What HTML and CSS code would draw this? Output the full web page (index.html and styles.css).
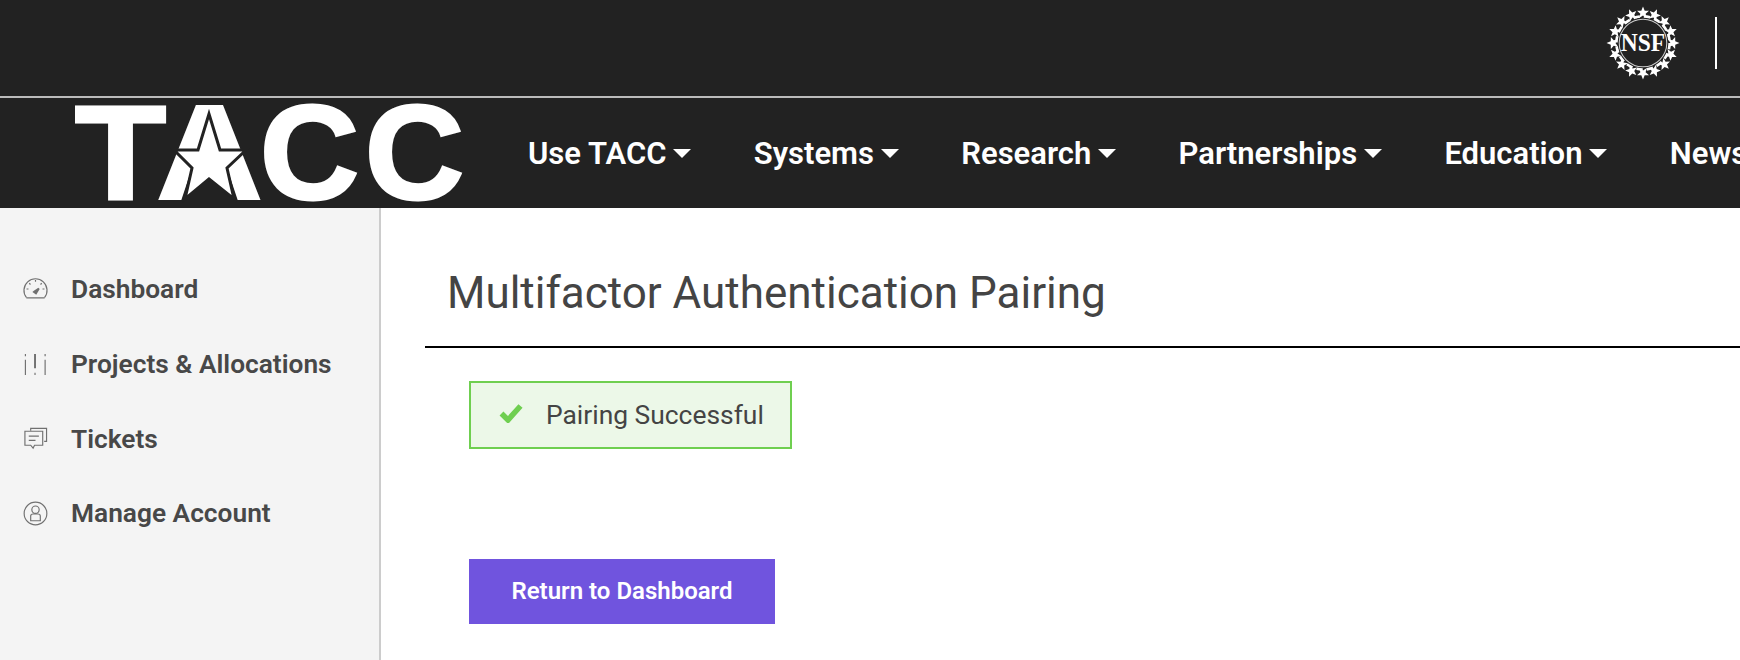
FILE: index.html
```html
<!DOCTYPE html>
<html lang="en">
<head>
<meta charset="utf-8">
<title>Multifactor Authentication Pairing</title>
<link rel="stylesheet" href="styles.css">
</head>
<body>
<header class="site-header">
  <div class="top-bar">
    <svg class="nsf" viewBox="-35 -35 70 70" width="74" height="74" aria-label="NSF">
      <defs>
        <polygon id="st" points="0,-6 1.6,-2 5.7,-1.9 2.5,0.8 3.6,4.9 0,2.5 -3.6,4.9 -2.5,0.8 -5.7,-1.9 -1.6,-2"/>
      </defs>
      <circle class="nsf-dash" r="25.2"/>
      <circle class="nsf-thin" r="22.5"/>
      <g class="nsf-stars">
        <use href="#st" transform="rotate(0) translate(0 -28.5)"/>
        <use href="#st" transform="rotate(22.5) translate(0 -28.5)"/>
        <use href="#st" transform="rotate(45) translate(0 -28.5)"/>
        <use href="#st" transform="rotate(67.5) translate(0 -28.5)"/>
        <use href="#st" transform="rotate(90) translate(0 -28.5)"/>
        <use href="#st" transform="rotate(112.5) translate(0 -28.5)"/>
        <use href="#st" transform="rotate(135) translate(0 -28.5)"/>
        <use href="#st" transform="rotate(157.5) translate(0 -28.5)"/>
        <use href="#st" transform="rotate(180) translate(0 -28.5)"/>
        <use href="#st" transform="rotate(202.5) translate(0 -28.5)"/>
        <use href="#st" transform="rotate(225) translate(0 -28.5)"/>
        <use href="#st" transform="rotate(247.5) translate(0 -28.5)"/>
        <use href="#st" transform="rotate(270) translate(0 -28.5)"/>
        <use href="#st" transform="rotate(292.5) translate(0 -28.5)"/>
        <use href="#st" transform="rotate(315) translate(0 -28.5)"/>
        <use href="#st" transform="rotate(337.5) translate(0 -28.5)"/>
      </g>
      <text class="nsf-text" x="0" y="7.500" text-anchor="middle" textLength="42" lengthAdjust="spacingAndGlyphs">NSF</text>
    </svg>
    <span class="top-divider"></span>
  </div>
  <nav class="main-nav">
    <svg class="logo" viewBox="0 0 470 110" width="470" height="110" aria-label="TACC">
      <g class="logo-letters">
        <text x="75" y="100.500" textLength="91" lengthAdjust="spacingAndGlyphs">T</text>
        <text x="157" y="100.500" textLength="105" lengthAdjust="spacingAndGlyphs">A</text>
        <text x="260" y="100.500" textLength="99" lengthAdjust="spacingAndGlyphs">C</text>
        <text x="365" y="100.500" textLength="99" lengthAdjust="spacingAndGlyphs">C</text>
      </g>
      <polygon class="logo-fill" points="209,8 186,62 232,62"/>
      <polygon class="logo-notch" points="181,103 192,70 227,70 238,103"/>
      <polygon class="logo-star" points="209,16 220,52 246,52 227,70 234,101 209,81 185,101 192,70 174,52 198,52"/>
    </svg>
    <ul class="nav-list">
      <li class="nav-item">Use TACC<span class="caret"></span></li>
      <li class="nav-item">Systems<span class="caret"></span></li>
      <li class="nav-item">Research<span class="caret"></span></li>
      <li class="nav-item">Partnerships<span class="caret"></span></li>
      <li class="nav-item">Education<span class="caret"></span></li>
      <li class="nav-item">News</li>
    </ul>
  </nav>
</header>
<div class="layout">
  <aside class="sidebar">
    <a class="side-link">
      <svg class="side-icon" viewBox="0 0 26 26"><path d="M3.500 21.200A12 12 0 1 1 22.500 21.200M3.500 21.700H22.500"/><path d="M13 3v2M3.700 12.500h2M20.300 12.500h2M6.500 6.500l1.300 1.300M19.500 6.500l-1.300 1.300"/><path class="thick" d="M11.500 15.500l5-3.500-3 5z"/></svg>
      <span>Dashboard</span>
    </a>
    <a class="side-link">
      <svg class="side-icon" viewBox="0 0 26 26"><path d="M2.500 2v2.500M2.500 8v16M12.500 21.500v2.500M23 2v2.500M23 8v16"/><path class="thick" d="M12.500 2v15"/></svg>
      <span>Projects &amp; Allocations</span>
    </a>
    <a class="side-link">
      <svg class="side-icon" viewBox="0 0 26 26"><path d="M8 5V2.500H24.500V16H22"/><path d="M2 8.500V5.500H20.500V20H12L10.500 23 8 20H2V8.500z"/><path d="M6 10.500H16.500M6 15H13"/></svg>
      <span>Tickets</span>
    </a>
    <a class="side-link">
      <svg class="side-icon" viewBox="0 0 26 26"><circle cx="13" cy="13" r="11.800"/><circle cx="13" cy="9" r="3.800"/><path d="M8 20.500V15.500Q8 13.500 10.500 13.500H15.500Q18 13.500 18 15.500V20.500z"/></svg>
      <span>Manage Account</span>
    </a>
  </aside>
  <main class="content">
    <h1 class="page-title">Multifactor Authentication Pairing</h1>
    <div class="body-pane">
      <div class="alert">
        <svg class="check" viewBox="0 0 24 20"><path d="M2.500 10.500l6.500 6.500L21.500 3"/></svg>
        <span>Pairing Successful</span>
      </div>
      <a class="btn">Return to Dashboard</a>
    </div>
  </main>
</div>
</body>
</html>
```
FILE: styles.css
```css
* { box-sizing: border-box; }
html, body { margin: 0; height: 100%; }
body {
  width: 1740px;
  height: 660px;
  overflow: hidden;
  background: #fff;
  font-family: Roboto, "Liberation Sans", sans-serif;
  color: #444;
  display: flex;
  flex-direction: column;
}
.site-header { background: #222; flex: none; }
.top-bar {
  height: 98px;
  border-bottom: 2px solid #bbb;
  display: flex;
  align-items: center;
  justify-content: flex-end;
  padding: 0 23px 10px 0;
  gap: 35px;
}
.nsf { display: block; }
.nsf-dash { fill: none; stroke: #fff; stroke-width: 2.5; stroke-dasharray: 6 3.9; }
.nsf-thin { fill: none; stroke: #ccc; stroke-width: 1; }
.nsf-stars { fill: #fff; }
.nsf-text { font-family: "Liberation Serif", serif; font-weight: 700; font-size: 23px; fill: #fff; }
.top-divider { width: 2px; height: 52px; background: #fff; }
.main-nav { height: 110px; display: flex; }
.logo { flex: none; display: block; overflow: visible; }
.logo-letters {
  font-family: "Liberation Sans", sans-serif;
  font-weight: 700;
  font-size: 133px;
  fill: #fff;
  stroke: #fff;
  stroke-width: 3;
}
.logo-fill { fill: #fff; }
.logo-notch { fill: #222; }
.logo-star { fill: #fff; stroke: #222; stroke-width: 3; }
.nav-list {
  list-style: none;
  margin: 0;
  padding: 0 0 0 58px;
  display: flex;
  gap: 62.3px;
  height: 110px;
  align-items: center;
  white-space: nowrap;
}
.nav-item { font-size: 31px; font-weight: 600; color: #fff; display: flex; align-items: center; }
.caret {
  width: 0; height: 0; margin-left: 7px;
  border-left: 9px solid transparent;
  border-right: 9px solid transparent;
  border-top: 9px solid #fff;
}
.layout { flex: 1; display: flex; min-height: 0; }
.sidebar {
  width: 381px;
  flex: none;
  background: #f4f4f4;
  border-right: 2px solid #ccc;
  padding: 44px 0 0 23px;
  display: flex;
  flex-direction: column;
}
.side-link {
  height: 74.7px;
  display: flex;
  align-items: center;
  gap: 23px;
  font-size: 26.3px;
  font-weight: 600;
  color: #484848;
}
.side-icon { width: 25px; height: 25px; flex: none; fill: none; stroke: #707070; stroke-width: 1.2; }
.side-icon .thick { stroke-width: 2; fill: #707070; }
.content { flex: 1; padding-left: 44px; min-width: 0; }
.page-title {
  margin: 0;
  height: 140px;
  padding: 57px 0 0 22px;
  border-bottom: 2px solid #000;
  font-size: 44px;
  line-height: 56px;
  font-weight: 400;
  color: #444;
}
.body-pane { padding: 33px 0 0 44px; display: flex; flex-direction: column; align-items: flex-start; }
.alert {
  width: 323px;
  height: 68px;
  border: 2px solid #6fcf50;
  background: #ecf8e8;
  display: flex;
  align-items: center;
  padding-left: 28px;
  gap: 23px;
  font-size: 26.4px;
}
.check { width: 24px; height: 20px; flex: none; fill: none; stroke: #6fcf50; stroke-width: 5.5; margin-top: -4px; }
.btn {
  margin-top: 110px;
  padding-bottom: 1px;
  width: 306px;
  height: 65px;
  background: #7054de;
  color: #fff;
  display: flex;
  align-items: center;
  justify-content: center;
  font-size: 24px;
  font-weight: 600;
}
```
